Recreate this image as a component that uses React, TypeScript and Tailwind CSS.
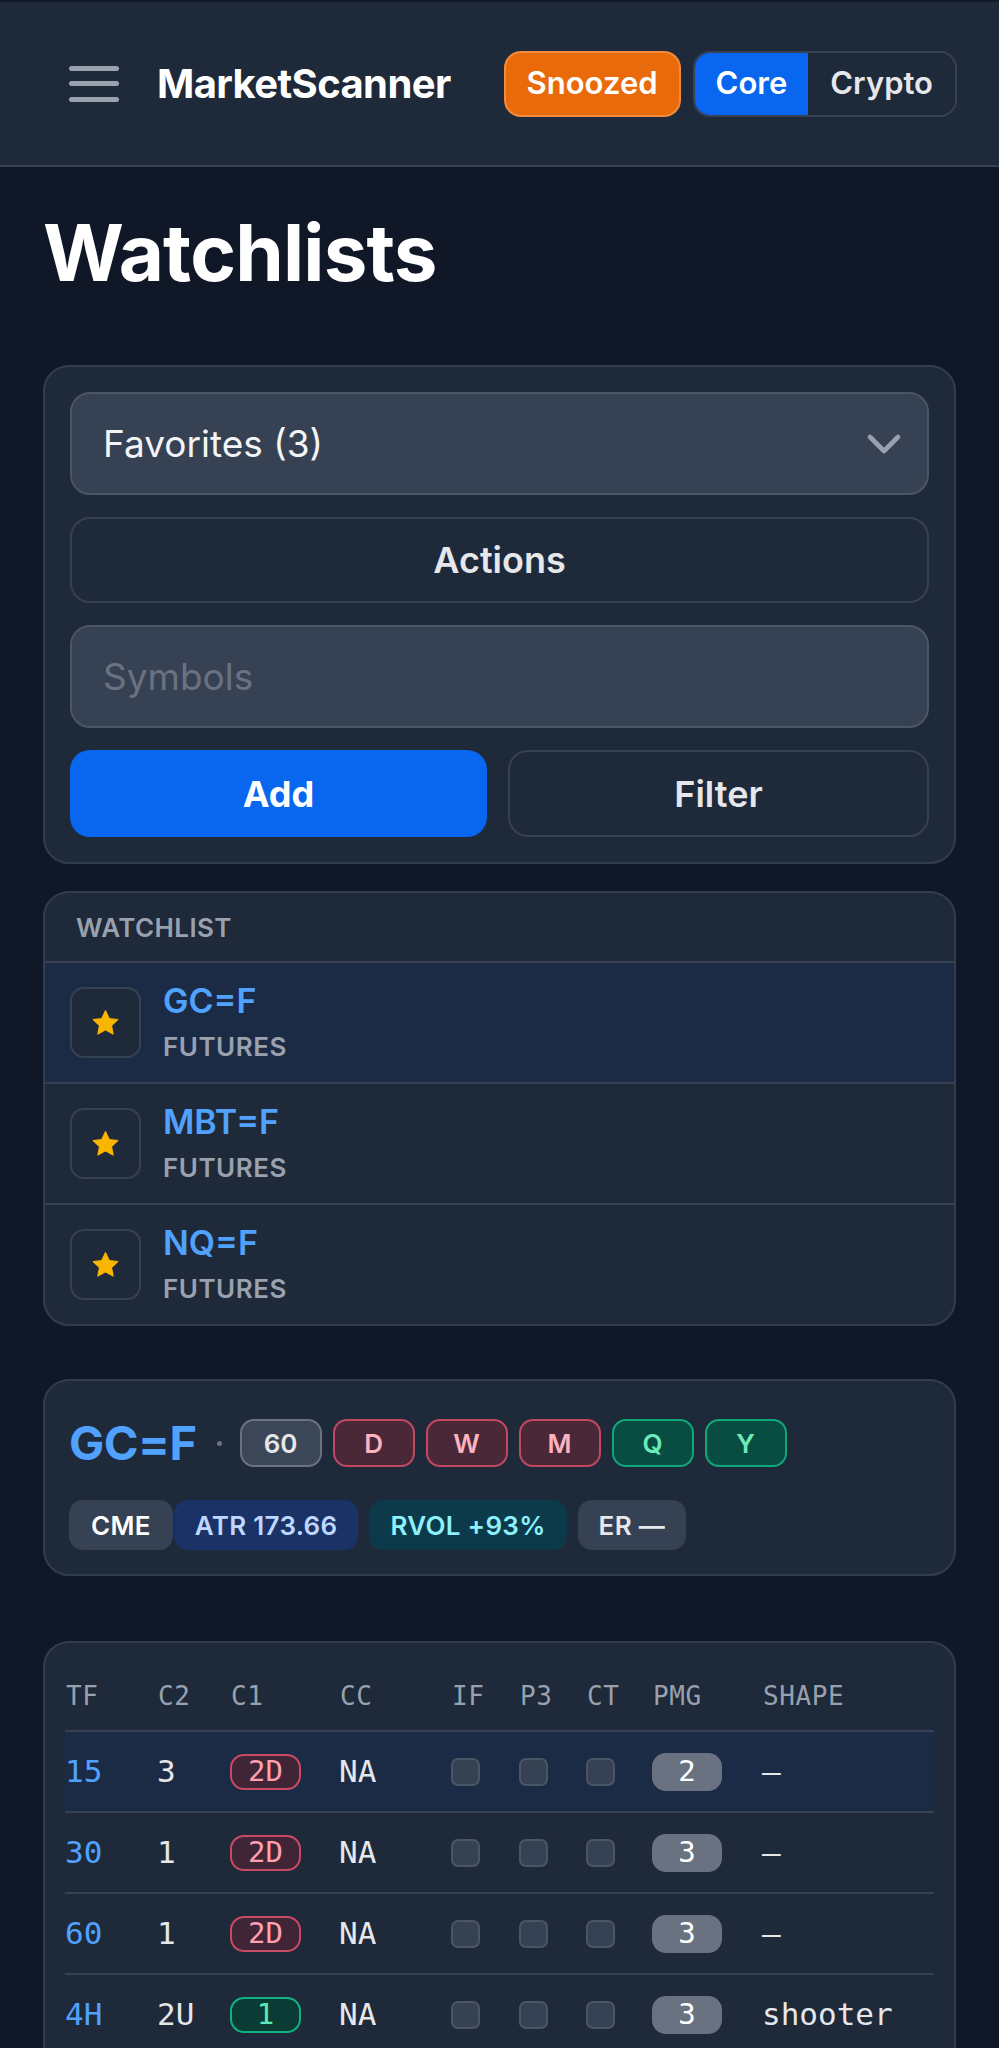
import { ChevronDown } from 'lucide-react';

type Tone = 'slate' | 'rose' | 'emerald';

const chipTone: Record<Tone, string> = {
  slate: 'bg-[#3b4757] border-gray-500 text-gray-200',
  rose: 'bg-[#4a2838] border-[#c24862] text-[#fdb2c0]',
  emerald: 'bg-[#094c41] border-[#10a77b] text-[#6eeab9]',
};

const cellTone: Record<Tone, string> = {
  slate: 'bg-gray-700 border-gray-500 text-gray-200',
  rose: 'bg-[#3f2536] border-[#c94a64] text-[#ff9fb0]',
  emerald: 'bg-[#0a3c35] border-[#10b37f] text-[#5ee9b5]',
};

const watchlist = [
  { symbol: 'GC=F', kind: 'FUTURES', active: true },
  { symbol: 'MBT=F', kind: 'FUTURES', active: false },
  { symbol: 'NQ=F', kind: 'FUTURES', active: false },
];

const timeframes: { label: string; tone: Tone }[] = [
  { label: '60', tone: 'slate' },
  { label: 'D', tone: 'rose' },
  { label: 'W', tone: 'rose' },
  { label: 'M', tone: 'rose' },
  { label: 'Q', tone: 'emerald' },
  { label: 'Y', tone: 'emerald' },
];

const rows: {
  tf: string;
  c2: string;
  c1: string;
  c1Tone: Tone;
  cc: string;
  pmg: string;
  shape: string;
  active?: boolean;
}[] = [
  { tf: '15', c2: '3', c1: '2D', c1Tone: 'rose', cc: 'NA', pmg: '2', shape: '—', active: true },
  { tf: '30', c2: '1', c1: '2D', c1Tone: 'rose', cc: 'NA', pmg: '3', shape: '—' },
  { tf: '60', c2: '1', c1: '2D', c1Tone: 'rose', cc: 'NA', pmg: '3', shape: '—' },
  { tf: '4H', c2: '2U', c1: '1', c1Tone: 'emerald', cc: 'NA', pmg: '3', shape: 'shooter' },
];

const headers = ['TF', 'C2', 'C1', 'CC', 'IF', 'P3', 'CT', 'PMG', 'SHAPE'];

function StarIcon() {
  return (
    <svg width="31" height="30" viewBox="0 0 24 24" aria-hidden="true">
      <path
        d="M12 2.2l2.95 6.3 6.85.8-5.07 4.7 1.35 6.8L12 17.4l-6.08 3.4 1.35-6.8L2.2 9.3l6.85-.8z"
        fill="#f9b500"
        stroke="#f9b500"
        strokeWidth="1"
        strokeLinejoin="round"
      />
    </svg>
  );
}

function Checkbox() {
  return <div className="h-[28px] w-[29px] rounded-[7px] border-2 border-gray-600 bg-gray-700" />;
}

export default function App() {
  return (
    <div className="min-h-screen bg-gray-900 text-white [font-family:Inter,sans-serif]">
      {/* top bar */}
      <header className="flex h-[167px] items-center justify-between border-t-2 border-b-2 border-t-[#121a27] border-b-gray-700 bg-gray-800 pl-[69px] pr-[42px]">
        <div className="flex items-center">
          <div className="flex flex-col gap-[10.5px]">
            <span className="block h-[5px] w-[50px] rounded-full bg-gray-400" />
            <span className="block h-[5px] w-[50px] rounded-full bg-gray-400" />
            <span className="block h-[5px] w-[50px] rounded-full bg-gray-400" />
          </div>
          <span className="ml-[38px] text-[40px] font-bold tracking-[-0.6px] text-white">MarketScanner</span>
        </div>
        <div className="flex items-center gap-[12px]">
          <button
            type="button"
            className="flex h-[66px] items-center rounded-[17px] border-2 border-[#f08a3c] bg-[#e96a0b] px-[21px] text-[31px] font-semibold text-white"
          >
            Snoozed
          </button>
          <div className="flex h-[66px] overflow-hidden rounded-[17px] border-2 border-gray-700">
            <button type="button" className="flex items-center bg-[#0866ef] px-[21px] text-[31px] font-semibold text-white">
              Core
            </button>
            <button type="button" className="flex items-center bg-gray-800 px-[22px] text-[31px] font-semibold text-gray-200">
              Crypto
            </button>
          </div>
        </div>
      </header>

      <main className="px-[43px] pt-[39px] pb-[80px]">
        <h1 className="text-[78px] leading-[94px] font-bold tracking-[-0.8px] text-white">Watchlists</h1>

        {/* list controls */}
        <section className="mt-[65px] flex flex-col gap-[22px] rounded-[26px] border-2 border-[#313d4f] bg-gray-800 p-[25px]">
          <div className="flex h-[103px] items-center justify-between rounded-[20px] border-2 border-gray-600 bg-gray-700 pl-[31px] pr-[15px]">
            <span className="text-[37px] text-gray-100">Favorites (3)</span>
            <ChevronDown size={56} strokeWidth={2} className="text-gray-400" />
          </div>
          <button
            type="button"
            className="h-[86px] rounded-[20px] border-2 border-gray-700 bg-gray-800 text-[36px] font-semibold text-gray-200"
          >
            Actions
          </button>
          <div className="flex h-[103px] items-center rounded-[20px] border-2 border-gray-600 bg-gray-700 pl-[31px]">
            <span className="text-[37px] text-gray-500">Symbols</span>
          </div>
          <div className="flex gap-[21px]">
            <button type="button" className="h-[87px] flex-1 rounded-[20px] bg-[#0866ef] text-[36px] font-bold text-white">
              Add
            </button>
            <button
              type="button"
              className="h-[87px] flex-1 rounded-[20px] border-2 border-gray-700 bg-gray-800 text-[36px] font-semibold text-gray-200"
            >
              Filter
            </button>
          </div>
        </section>

        {/* watchlist */}
        <section className="mt-[27px] overflow-hidden rounded-[26px] border-2 border-[#313d4f] bg-gray-800">
          <div className="flex h-[70px] items-center border-b-2 border-gray-700 pl-[31px] text-[26px] font-semibold tracking-[0.4px] text-gray-400">
            WATCHLIST
          </div>
          {watchlist.map((item, i) => (
            <div
              key={item.symbol}
              className={`flex items-center py-[18px] pl-[25px] ${i > 0 ? 'border-t-2 border-gray-700' : ''} ${
                item.active ? 'bg-[#1c2b45]' : ''
              }`}
            >
              <div className="flex h-[71px] w-[71px] items-center justify-center rounded-[14px] border-2 border-gray-700 bg-gray-800">
                <StarIcon />
              </div>
              <div className="ml-[22px] flex flex-col">
                <span className="text-[34px] leading-[40px] font-semibold text-blue-400">{item.symbol}</span>
                <span className="mt-[9px] text-[26px] leading-[34px] font-semibold tracking-[0.5px] text-gray-400">
                  {item.kind}
                </span>
              </div>
            </div>
          ))}
        </section>

        {/* selected symbol */}
        <section className="mt-[53px] rounded-[26px] border-2 border-[#313d4f] bg-gray-800 p-[24px]">
          <div className="flex h-[76px] items-center">
            <span className="text-[47px] font-bold tracking-[-0.5px] text-blue-400">GC=F</span>
            <span className="ml-[20px] h-[5px] w-[5px] rounded-full bg-gray-500" />
            <div className="ml-[18px] flex gap-[11px]">
              {timeframes.map((t) => (
                <span
                  key={t.label}
                  className={`flex h-[48px] w-[82px] items-center justify-center rounded-[14px] border-2 text-[26px] font-semibold ${chipTone[t.tone]}`}
                >
                  {t.label}
                </span>
              ))}
            </div>
          </div>
          <div className="mt-[19px] flex items-center gap-[11px] text-[26px] font-semibold tracking-[0.3px]">
            <div className="flex gap-[1px]">
              <span className="flex h-[50px] items-center rounded-[14px] bg-gray-700 px-[22px] text-white">CME</span>
              <span className="flex h-[50px] items-center rounded-[14px] bg-[#1b3266] px-[21px] text-[#bfd7ff]">ATR 173.66</span>
            </div>
            <span className="flex h-[50px] items-center rounded-[14px] bg-[#0c3a4a] px-[21px] text-[#8cf1fb]">RVOL +93%</span>
            <span className="flex h-[50px] items-center rounded-[14px] bg-gray-700 px-[21px] text-gray-200">ER —</span>
          </div>
        </section>

        {/* timeframe table */}
        <section className="mt-[65px] rounded-[26px] border-2 border-[#313d4f] bg-gray-800 px-[20px] pt-[20px] pb-[20px] [font-family:'DejaVu_Sans_Mono',monospace]">
          <div className="grid h-[69px] grid-cols-[92px_73px_109px_112px_68px_67px_66px_110px_1fr] items-center border-b-2 border-gray-700 text-[26px] tracking-[0.6px] text-gray-400">
            {headers.map((h) => (
              <span key={h} className="pl-[1px]">
                {h}
              </span>
            ))}
          </div>
          {rows.map((r) => (
            <div
              key={r.tf}
              className={`grid h-[81px] grid-cols-[92px_73px_109px_112px_68px_67px_66px_110px_1fr] items-center border-b-2 border-gray-700 text-[31px] text-gray-200 ${
                r.active ? 'bg-[#1c2b45]' : ''
              }`}
            >
              <span className="text-blue-400">{r.tf}</span>
              <span>{r.c2}</span>
              <span
                className={`flex h-[36px] w-[71px] items-center justify-center rounded-[14px] border-2 text-[29px] ${cellTone[r.c1Tone]}`}
              >
                {r.c1}
              </span>
              <span>{r.cc}</span>
              <Checkbox />
              <Checkbox />
              <Checkbox />
              <span className="flex h-[38px] w-[70px] items-center justify-center rounded-[14px] bg-gray-500 text-[29px] text-white">
                {r.pmg}
              </span>
              <span>{r.shape}</span>
            </div>
          ))}
        </section>
      </main>
    </div>
  );
}
